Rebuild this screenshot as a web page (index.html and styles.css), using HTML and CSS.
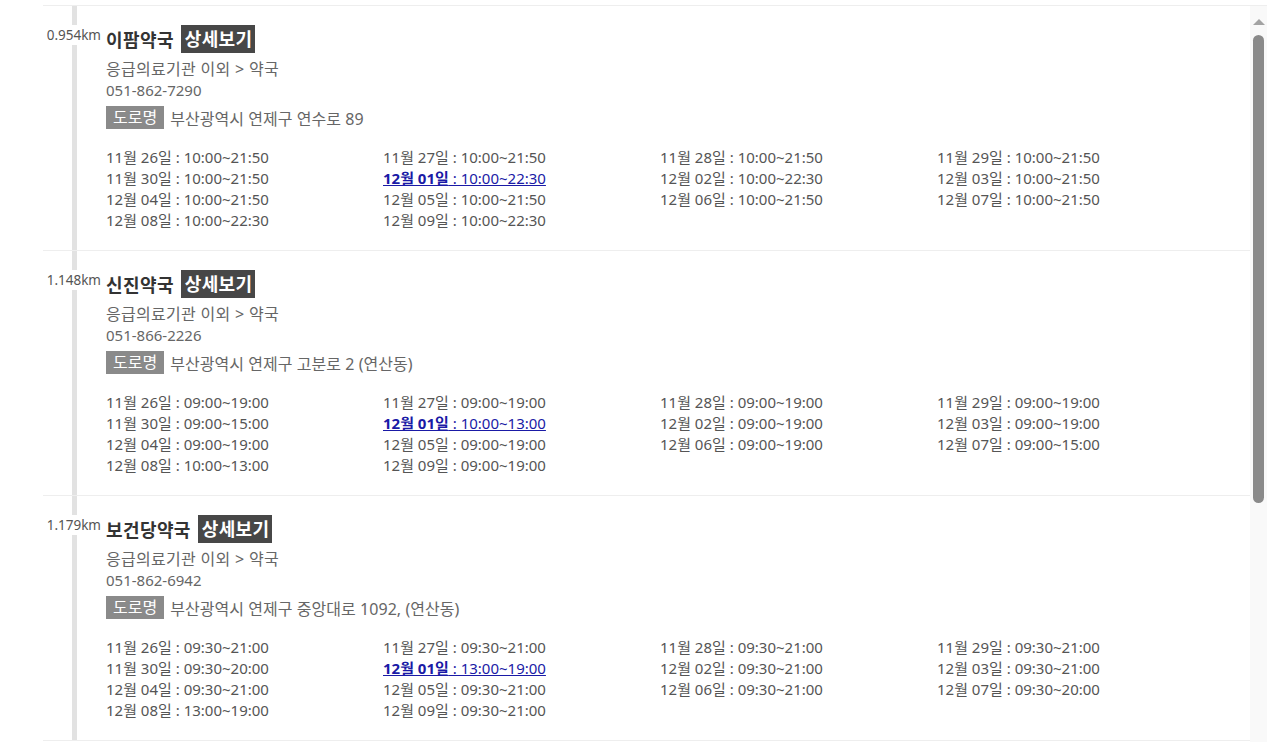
FILE: index.html
```html
<!DOCTYPE html>
<html lang="ko">
<head>
<meta charset="utf-8">
<title>약국 목록</title>
<link rel="stylesheet" href="styles.css">
</head>
<body>
<div class="frame">
  <div class="viewport">
    <ul class="list">
      <li class="item">
        <div class="rail">
          <span class="dist">0.954km</span>
          <div class="title"><span class="name">이팜약국</span><a class="detail" href="#">상세보기</a></div>
          <p class="line cat">응급의료기관 이외 &gt; 약국</p>
          <p class="line">051-862-7290</p>
          <p class="addr"><span class="road">도로명</span>부산광역시 연제구 연수로 89</p>
          <ul class="hours">
            <li>11월 26일 : 10:00~21:50</li>
            <li>11월 27일 : 10:00~21:50</li>
            <li>11월 28일 : 10:00~21:50</li>
            <li>11월 29일 : 10:00~21:50</li>
            <li>11월 30일 : 10:00~21:50</li>
            <li><a class="today" href="#"><b>12월 01일</b> : 10:00~22:30</a></li>
            <li>12월 02일 : 10:00~22:30</li>
            <li>12월 03일 : 10:00~21:50</li>
            <li>12월 04일 : 10:00~21:50</li>
            <li>12월 05일 : 10:00~21:50</li>
            <li>12월 06일 : 10:00~21:50</li>
            <li>12월 07일 : 10:00~21:50</li>
            <li>12월 08일 : 10:00~22:30</li>
            <li>12월 09일 : 10:00~22:30</li>
          </ul>
        </div>
      </li>
      <li class="item">
        <div class="rail">
          <span class="dist">1.148km</span>
          <div class="title"><span class="name">신진약국</span><a class="detail" href="#">상세보기</a></div>
          <p class="line cat">응급의료기관 이외 &gt; 약국</p>
          <p class="line">051-866-2226</p>
          <p class="addr"><span class="road">도로명</span>부산광역시 연제구 고분로 2 (연산동)</p>
          <ul class="hours">
            <li>11월 26일 : 09:00~19:00</li>
            <li>11월 27일 : 09:00~19:00</li>
            <li>11월 28일 : 09:00~19:00</li>
            <li>11월 29일 : 09:00~19:00</li>
            <li>11월 30일 : 09:00~15:00</li>
            <li><a class="today" href="#"><b>12월 01일</b> : 10:00~13:00</a></li>
            <li>12월 02일 : 09:00~19:00</li>
            <li>12월 03일 : 09:00~19:00</li>
            <li>12월 04일 : 09:00~19:00</li>
            <li>12월 05일 : 09:00~19:00</li>
            <li>12월 06일 : 09:00~19:00</li>
            <li>12월 07일 : 09:00~15:00</li>
            <li>12월 08일 : 10:00~13:00</li>
            <li>12월 09일 : 09:00~19:00</li>
          </ul>
        </div>
      </li>
      <li class="item">
        <div class="rail">
          <span class="dist">1.179km</span>
          <div class="title"><span class="name">보건당약국</span><a class="detail" href="#">상세보기</a></div>
          <p class="line cat">응급의료기관 이외 &gt; 약국</p>
          <p class="line">051-862-6942</p>
          <p class="addr"><span class="road">도로명</span>부산광역시 연제구 중앙대로 1092, (연산동)</p>
          <ul class="hours">
            <li>11월 26일 : 09:30~21:00</li>
            <li>11월 27일 : 09:30~21:00</li>
            <li>11월 28일 : 09:30~21:00</li>
            <li>11월 29일 : 09:30~21:00</li>
            <li>11월 30일 : 09:30~20:00</li>
            <li><a class="today" href="#"><b>12월 01일</b> : 13:00~19:00</a></li>
            <li>12월 02일 : 09:30~21:00</li>
            <li>12월 03일 : 09:30~21:00</li>
            <li>12월 04일 : 09:30~21:00</li>
            <li>12월 05일 : 09:30~21:00</li>
            <li>12월 06일 : 09:30~21:00</li>
            <li>12월 07일 : 09:30~20:00</li>
            <li>12월 08일 : 13:00~19:00</li>
            <li>12월 09일 : 09:30~21:00</li>
          </ul>
        </div>
      </li>
    </ul>
  </div>
  <div class="scrollbar" aria-hidden="true">
    <span class="arrow-up"></span>
    <span class="thumb"></span>
  </div>
</div>
</body>
</html>
```
FILE: styles.css
```css
html, body {
  margin: 0;
  padding: 0;
  background: #fff;
  overflow: hidden;
}

body {
  font-family: "Noto Sans", "Noto Sans CJK KR", sans-serif;
  color: #666;
}

.frame {
  display: flex;
  margin: 5px 10px 0 43px;
  height: 736px;
  border-top: 1px solid #eeeeee;
}

.viewport {
  flex: 1;
  overflow: hidden;
}

.scrollbar {
  width: 17px;
  flex: none;
  background: #f9f9f9;
  display: flex;
  flex-direction: column;
  align-items: center;
}

.arrow-up {
  width: 0;
  height: 0;
  margin-top: 13px;
  border-left: 6.5px solid transparent;
  border-right: 6.5px solid transparent;
  border-bottom: 6px solid #a3a3a3;
}

.thumb {
  width: 11px;
  height: 468px;
  margin-top: 10px;
  border-radius: 6px;
  background: #8a8a8a;
}

.list {
  list-style: none;
  margin: 0;
  padding: 0;
}

.item {
  border-bottom: 1px solid #eeeeee;
}

.rail {
  position: relative;
  margin-left: 29px;
  border-left: 5px solid #e2e2e2;
  padding: 19px 0 19px 29px;
}

.dist {
  position: absolute;
  left: -31px;
  top: 19px;
  width: 55px;
  height: 20px;
  line-height: 20px;
  text-align: right;
  background: #fff;
  font-size: 13.5px;
  color: #555;
}

.title {
  display: flex;
  align-items: center;
  height: 28px;
  margin-bottom: 6px;
}

.name {
  font-size: 18px;
  font-weight: bold;
  letter-spacing: 0.4px;
  color: #333;
}

.detail {
  margin-left: 7px;
  padding: 0 3px 0 4px;
  height: 28px;
  line-height: 28px;
  background: #474747;
  color: #fff;
  font-size: 18px;
  font-weight: bold;
  letter-spacing: 0.3px;
  text-decoration: none;
}

.line {
  margin: 0;
  font-size: 15px;
  line-height: 21px;
  color: #666;
}

.cat {
  font-size: 16px;
  letter-spacing: 0.3px;
}

.addr {
  display: flex;
  align-items: center;
  margin: 5px 0 0 0;
  height: 23px;
  font-size: 16px;
  letter-spacing: 0.05px;
  color: #666;
}

.road {
  display: inline-block;
  height: 23px;
  line-height: 23px;
  padding: 0 7px;
  margin-right: 6px;
  background: #8a8a8a;
  color: #fff;
  letter-spacing: 0;
}

.hours {
  list-style: none;
  margin: 18px 0 0 0;
  padding: 0;
  display: grid;
  grid-template-columns: repeat(4, 277px);
  font-size: 15px;
  line-height: 21px;
  color: #555;
}

.today {
  color: #1a1aa6;
  text-decoration: underline;
}

.today b {
  font-weight: bold;
}
```
